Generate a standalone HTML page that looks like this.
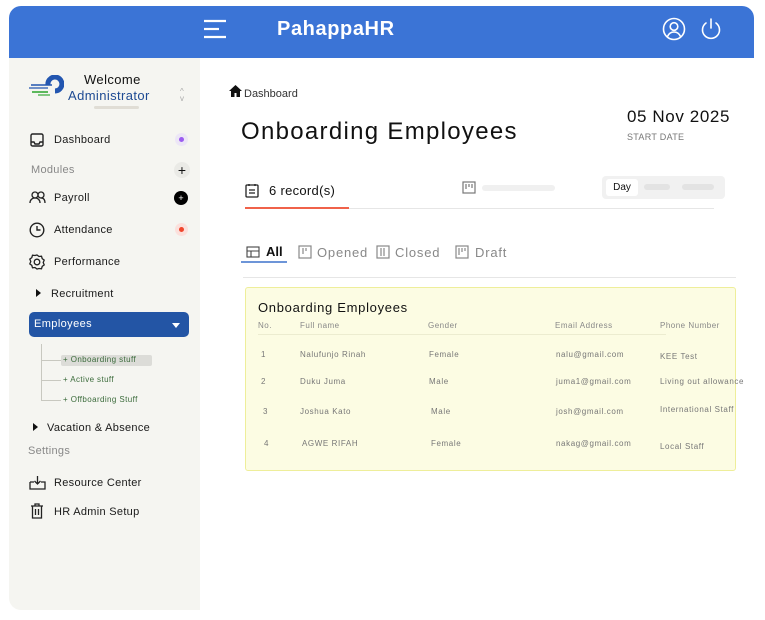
<!DOCTYPE html>
<html><head><meta charset="utf-8"><style>
*{margin:0;padding:0;box-sizing:border-box}
body{width:765px;height:620px;background:#fff;font-family:"Liberation Sans",sans-serif;position:relative;overflow:hidden;color:#111}
.a{position:absolute;white-space:nowrap}
.hdr{left:9px;top:6px;width:745px;height:52px;background:#3b74d6;border-radius:12px 12px 0 0}
.side{left:9px;top:58px;width:191px;height:552px;background:#f5f5f1;border-radius:0 0 0 12px}
.nav{font-size:11px;color:#1a1a1a;letter-spacing:.3px}
.gray{color:#888}
.th{font-size:8px;color:#888;letter-spacing:.5px}
.td{font-size:8px;color:#777;letter-spacing:.6px}
svg{position:absolute}
</style></head><body>
<div class="a hdr"></div>
<svg style="left:203px;top:19px" width="25" height="20"><g stroke="#fff" stroke-width="2.2"><line x1="1" y1="2" x2="23" y2="2"/><line x1="1" y1="10" x2="16" y2="10"/><line x1="1" y1="18" x2="23" y2="18"/></g></svg>
<div class="a" style="left:277px;top:18px;font-size:20px;font-weight:bold;color:#fff;letter-spacing:.6px">PahappaHR</div>
<svg style="left:662px;top:17px" width="24" height="24" fill="none" stroke="#fff" stroke-width="1.6"><circle cx="12" cy="12" r="10.5"/><circle cx="12" cy="9.5" r="3.8"/><path d="M5.5 19.5c1.5-3.5 4-4.5 6.5-4.5s5 1 6.5 4.5"/></svg>
<svg style="left:699px;top:17px" width="24" height="24" fill="none" stroke="#fff" stroke-width="1.6" stroke-linecap="round"><path d="M7 6a8.5 8.5 0 1 0 10 0"/><line x1="12" y1="2" x2="12" y2="11"/></svg>
<div class="a side"></div>
<svg style="left:28px;top:75px" width="36" height="22"><path d="M20 10a7 7 0 1 1 7 6" fill="none" stroke="#2356b0" stroke-width="5"/><line x1="3" y1="10" x2="24" y2="10" stroke="#2356b0" stroke-width="1.5"/><line x1="1" y1="13" x2="20" y2="13" stroke="#2356b0" stroke-width="1.2"/><line x1="4" y1="17" x2="20" y2="17" stroke="#5cb85c" stroke-width="2"/><line x1="10" y1="20" x2="22" y2="20" stroke="#5cb85c" stroke-width="1.5"/></svg>
<div class="a" style="left:84px;top:72px;font-size:13px;color:#111;letter-spacing:.4px">Welcome</div>
<div class="a" style="left:68px;top:88px;font-size:13px;color:#1d4a93;letter-spacing:.4px">Administrator</div>
<div class="a" style="left:94px;top:106px;width:45px;height:3px;background:#e0ddd5;border-radius:2px"></div>
<div class="a" style="left:180px;top:88px;font-size:8px;color:#aaa;line-height:7px">^<br>v</div>
<svg style="left:30px;top:133px" width="14" height="14" fill="none" stroke="#222" stroke-width="1.4"><rect x="1" y="1" width="12" height="12" rx="1.5"/><path d="M1 9h3l1 2h4l1-2h3"/></svg>
<div class="a nav" style="left:54px;top:134px">Dashboard</div>
<div class="a" style="left:175px;top:133px;width:13px;height:13px;border-radius:50%;background:#ece6f6"></div><div class="a" style="left:179px;top:137px;width:5px;height:5px;border-radius:50%;background:#9b5cf0"></div>
<div class="a nav gray" style="left:31px;top:164px">Modules</div>
<div class="a" style="left:174px;top:162px;width:16px;height:16px;border-radius:50%;background:#eaeae6;font-size:14px;line-height:16px;text-align:center">+</div>
<svg style="left:29px;top:191px" width="17" height="13" fill="none" stroke="#222" stroke-width="1.3"><circle cx="6" cy="4" r="3"/><path d="M1 12c0-3 2-5 5-5s5 2 5 5"/><circle cx="12" cy="4" r="3"/><path d="M12 7c3 0 4 2 4 5"/></svg>
<div class="a nav" style="left:54px;top:192px">Payroll</div>
<div class="a" style="left:174px;top:191px;width:14px;height:14px;border-radius:50%;background:#000;color:#fff;font-size:9px;line-height:14px;text-align:center">+</div>
<svg style="left:29px;top:222px" width="16" height="16" fill="none" stroke="#222" stroke-width="1.4"><circle cx="8" cy="8" r="6.8"/><path d="M8 4v4h3.5"/></svg>
<div class="a nav" style="left:54px;top:224px">Attendance</div>
<div class="a" style="left:175px;top:223px;width:13px;height:13px;border-radius:50%;background:#fbe0dc"></div><div class="a" style="left:179px;top:227px;width:5px;height:5px;border-radius:50%;background:#f0462d"></div>
<svg style="left:29px;top:254px" width="16" height="16" fill="none" stroke="#222" stroke-width="1.3"><path d="M8 1l2 1.5 2.5-.3.7 2.4 2 1.5-1 2.4 1 2.4-2 1.5-.7 2.4-2.5-.3L8 15l-2-1.5-2.5.3-.7-2.4-2-1.5 1-2.4-1-2.4 2-1.5.7-2.4 2.5.3z"/><circle cx="8" cy="8" r="2.8"/></svg>
<div class="a nav" style="left:54px;top:256px">Performance</div>
<div class="a" style="left:36px;top:289px;width:0;height:0;border-left:5px solid #111;border-top:4px solid transparent;border-bottom:4px solid transparent"></div>
<div class="a nav" style="left:51px;top:288px">Recruitment</div>
<div class="a" style="left:29px;top:312px;width:160px;height:25px;background:#2355a5;border-radius:5px"></div>
<div class="a" style="left:34px;top:318px;font-size:11px;color:#fff;letter-spacing:.4px">Employees</div>
<div class="a" style="left:172px;top:323px;width:0;height:0;border-top:5px solid #fff;border-left:4.5px solid transparent;border-right:4.5px solid transparent"></div>
<div class="a" style="left:41px;top:344px;width:1px;height:57px;background:#c8c8c0"></div>
<div class="a" style="left:41px;top:360px;width:20px;height:1px;background:#c8c8c0"></div>
<div class="a" style="left:41px;top:380px;width:20px;height:1px;background:#c8c8c0"></div>
<div class="a" style="left:41px;top:400px;width:20px;height:1px;background:#c8c8c0"></div>
<div class="a" style="left:61px;top:355px;width:91px;height:11px;background:#dcdcd8;border-radius:2px"></div>
<div class="a" style="left:63px;top:355px;font-size:8px;color:#3b6b3b;letter-spacing:.4px">+ Onboarding stuff</div>
<div class="a" style="left:63px;top:375px;font-size:8px;color:#3b6b3b;letter-spacing:.4px">+ Active stuff</div>
<div class="a" style="left:63px;top:395px;font-size:8px;color:#3b6b3b;letter-spacing:.4px">+ Offboarding Stuff</div>
<div class="a" style="left:33px;top:423px;width:0;height:0;border-left:5px solid #111;border-top:4px solid transparent;border-bottom:4px solid transparent"></div>
<div class="a nav" style="left:47px;top:422px">Vacation &amp; Absence</div>
<div class="a nav gray" style="left:28px;top:445px">Settings</div>
<svg style="left:29px;top:475px" width="17" height="15" fill="none" stroke="#222" stroke-width="1.3"><path d="M1 7v7h15V7h-4M5 7H1"/><path d="M8.5 1v8M5.5 6l3 3 3-3"/></svg>
<div class="a nav" style="left:54px;top:477px">Resource Center</div>
<svg style="left:30px;top:503px" width="14" height="16" fill="none" stroke="#222" stroke-width="1.3"><path d="M1 3h12M5 3V1h4v2M2.5 3v12h9V3M5.5 6v6M8.5 6v6"/></svg>
<div class="a nav" style="left:54px;top:506px">HR Admin Setup</div>
<svg style="left:229px;top:85px" width="13" height="12"><path d="M6.5 0L0 6h2v6h3.5V8h2v4H11V6h2z" fill="#111"/></svg>
<div class="a" style="left:244px;top:88px;font-size:11px;color:#333">Dashboard</div>
<div class="a" style="left:241px;top:118px;font-size:24px;color:#111;letter-spacing:1.3px">Onboarding Employees</div>
<div class="a" style="left:627px;top:107px;font-size:17px;color:#111;letter-spacing:.6px">05 Nov 2025</div>
<div class="a" style="left:627px;top:132px;font-size:9px;color:#777;letter-spacing:.3px">START DATE</div>
<svg style="left:245px;top:183px" width="14" height="15" fill="none" stroke="#222" stroke-width="1.3"><rect x="1" y="2" width="12" height="12" rx="1"/><path d="M4 1v2M10 1v2M4 7h6M4 10h6"/></svg>
<div class="a" style="left:269px;top:183px;font-size:13px;color:#111;letter-spacing:.3px">6 record(s)</div>
<div class="a" style="left:245px;top:208px;width:469px;height:1px;background:#e6e6e6"></div>
<div class="a" style="left:245px;top:207px;width:104px;height:2px;background:#f0624a"></div>
<svg style="left:462px;top:181px" width="14" height="13" fill="none" stroke="#777" stroke-width="1.2"><rect x="1" y="1" width="12" height="11"/><path d="M4 3v5M7 3v3M10 3v4"/></svg>
<div class="a" style="left:482px;top:185px;width:73px;height:6px;background:#f0f0f0;border-radius:3px"></div>
<div class="a" style="left:602px;top:176px;width:123px;height:23px;background:#f1f1f1;border-radius:4px"></div>
<div class="a" style="left:606px;top:179px;width:32px;height:17px;background:#fff;border-radius:3px;font-size:10px;line-height:17px;text-align:center">Day</div>
<div class="a" style="left:644px;top:184px;width:26px;height:6px;background:#e3e3e3;border-radius:3px"></div>
<div class="a" style="left:682px;top:184px;width:32px;height:6px;background:#e3e3e3;border-radius:3px"></div>
<svg style="left:246px;top:246px" width="14" height="12" fill="none" stroke="#444" stroke-width="1.1"><rect x="1" y="1" width="12" height="10"/><path d="M1 5h12M5 5v6"/></svg>
<div class="a" style="left:266px;top:244px;font-size:13px;color:#111;font-weight:bold">All</div>
<div class="a" style="left:241px;top:261px;width:46px;height:2px;background:#6d95d8"></div>
<svg style="left:298px;top:245px" width="14" height="14" fill="none" stroke="#888" stroke-width="1.2"><rect x="1" y="1" width="12" height="12"/><path d="M5 3v6M8 3v3"/></svg>
<div class="a" style="left:317px;top:245px;font-size:13px;color:#888;letter-spacing:.8px">Opened</div>
<svg style="left:376px;top:245px" width="14" height="14" fill="none" stroke="#888" stroke-width="1.2"><rect x="1" y="1" width="12" height="12"/><path d="M5 3v8M8 3v8"/></svg>
<div class="a" style="left:395px;top:245px;font-size:13px;color:#888;letter-spacing:.8px">Closed</div>
<svg style="left:455px;top:245px" width="14" height="14" fill="none" stroke="#888" stroke-width="1.2"><rect x="1" y="1" width="12" height="12"/><path d="M4 3v7M7 3v4M10 3v3"/></svg>
<div class="a" style="left:475px;top:245px;font-size:13px;color:#888;letter-spacing:.8px">Draft</div>
<div class="a" style="left:243px;top:277px;width:493px;height:1px;background:#e6e6e6"></div>
<div class="a" style="left:245px;top:287px;width:491px;height:184px;background:#fcfce3;border:1px solid #eeee9a;border-radius:3px"></div>
<div class="a" style="left:258px;top:300px;font-size:13px;color:#111;letter-spacing:.7px">Onboarding Employees</div>
<div class="a th" style="left:258px;top:321px">No.</div>
<div class="a th" style="left:300px;top:321px">Full name</div>
<div class="a th" style="left:428px;top:321px">Gender</div>
<div class="a th" style="left:555px;top:321px">Email Address</div>
<div class="a th" style="left:660px;top:321px">Phone Number</div>
<div class="a" style="left:258px;top:334px;width:408px;height:1px;background:#ececd0"></div>
<div class="a td" style="left:261px;top:350px">1</div><div class="a td" style="left:300px;top:350px">Nalufunjo Rinah</div><div class="a td" style="left:429px;top:350px">Female</div><div class="a td" style="left:556px;top:350px">nalu@gmail.com</div><div class="a td" style="left:660px;top:352px">KEE Test</div>
<div class="a td" style="left:261px;top:377px">2</div><div class="a td" style="left:300px;top:377px">Duku Juma</div><div class="a td" style="left:429px;top:377px">Male</div><div class="a td" style="left:556px;top:377px">juma1@gmail.com</div><div class="a td" style="left:660px;top:377px">Living out allowance</div>
<div class="a td" style="left:263px;top:407px">3</div><div class="a td" style="left:300px;top:407px">Joshua Kato</div><div class="a td" style="left:431px;top:407px">Male</div><div class="a td" style="left:556px;top:407px">josh@gmail.com</div><div class="a td" style="left:660px;top:405px">International Staff</div>
<div class="a td" style="left:264px;top:439px">4</div><div class="a td" style="left:302px;top:439px">AGWE RIFAH</div><div class="a td" style="left:431px;top:439px">Female</div><div class="a td" style="left:556px;top:439px">nakag@gmail.com</div><div class="a td" style="left:660px;top:442px">Local Staff</div>
</body></html>
